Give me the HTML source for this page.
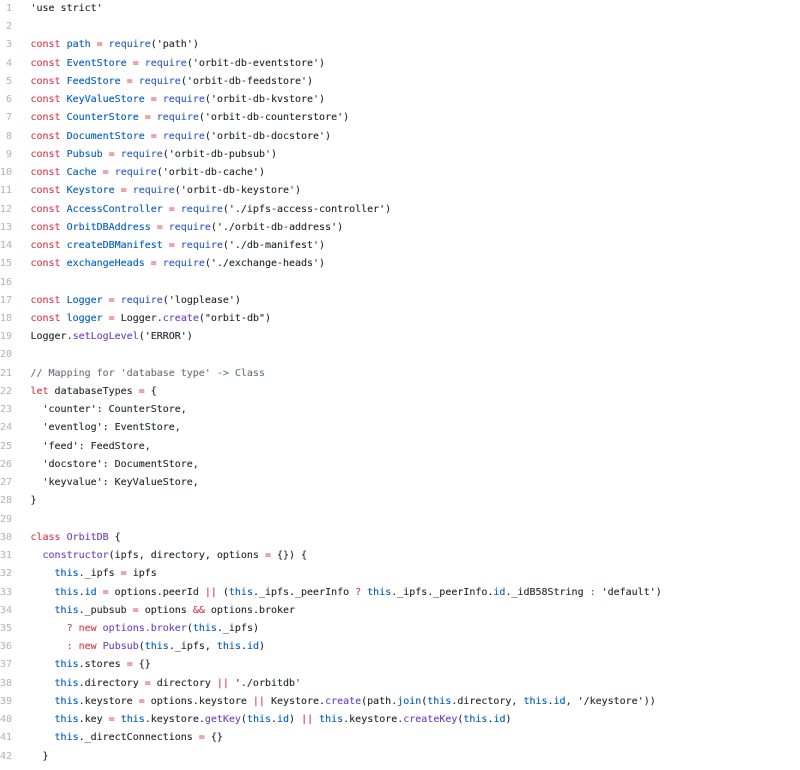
<!DOCTYPE html>
<html><head><meta charset="utf-8"><style>
html,body{margin:0;padding:0;background:#fff;width:800px;height:770px;overflow:hidden}
#w{position:absolute;left:0;top:0;width:800px;height:770px;font:10px/18.24px "DejaVu Sans Mono","Liberation Mono",monospace;color:#24292e;filter:blur(.25px);-webkit-text-stroke:.12px currentColor}
#n{position:absolute;left:0;top:0;width:12px;text-align:right;color:#b8b8b8;margin:0;font:inherit}
#c{position:absolute;left:30.5px;top:0;margin:0;font:inherit;white-space:pre;letter-spacing:-.01px}
i{font-style:normal}.k{color:#d73a49}.b{color:#005cc5}.r{color:#2f5cc5}.f{color:#6f42c1}.g{color:#6a737d}
</style></head><body><div id="w">
<pre id="n">1
2
3
4
5
6
7
8
9
10
11
12
13
14
15
16
17
18
19
20
21
22
23
24
25
26
27
28
29
30
31
32
33
34
35
36
37
38
39
40
41
42</pre>
<pre id="c">'use strict'

<i class="k">const</i> <i class="b">path</i> <i class="k">=</i> <i class="r">require</i>('path')
<i class="k">const</i> <i class="b">EventStore</i> <i class="k">=</i> <i class="r">require</i>('orbit-db-eventstore')
<i class="k">const</i> <i class="b">FeedStore</i> <i class="k">=</i> <i class="r">require</i>('orbit-db-feedstore')
<i class="k">const</i> <i class="b">KeyValueStore</i> <i class="k">=</i> <i class="r">require</i>('orbit-db-kvstore')
<i class="k">const</i> <i class="b">CounterStore</i> <i class="k">=</i> <i class="r">require</i>('orbit-db-counterstore')
<i class="k">const</i> <i class="b">DocumentStore</i> <i class="k">=</i> <i class="r">require</i>('orbit-db-docstore')
<i class="k">const</i> <i class="b">Pubsub</i> <i class="k">=</i> <i class="r">require</i>('orbit-db-pubsub')
<i class="k">const</i> <i class="b">Cache</i> <i class="k">=</i> <i class="r">require</i>('orbit-db-cache')
<i class="k">const</i> <i class="b">Keystore</i> <i class="k">=</i> <i class="r">require</i>('orbit-db-keystore')
<i class="k">const</i> <i class="b">AccessController</i> <i class="k">=</i> <i class="r">require</i>('./ipfs-access-controller')
<i class="k">const</i> <i class="b">OrbitDBAddress</i> <i class="k">=</i> <i class="r">require</i>('./orbit-db-address')
<i class="k">const</i> <i class="b">createDBManifest</i> <i class="k">=</i> <i class="r">require</i>('./db-manifest')
<i class="k">const</i> <i class="b">exchangeHeads</i> <i class="k">=</i> <i class="r">require</i>('./exchange-heads')

<i class="k">const</i> <i class="b">Logger</i> <i class="k">=</i> <i class="r">require</i>('logplease')
<i class="k">const</i> <i class="b">logger</i> <i class="k">=</i> Logger.<i class="f">create</i>("orbit-db")
Logger.<i class="f">setLogLevel</i>('ERROR')

<i class="g">// Mapping for 'database type' -&gt; Class</i>
<i class="k">let</i> databaseTypes <i class="k">=</i> {
  'counter': CounterStore,
  'eventlog': EventStore,
  'feed': FeedStore,
  'docstore': DocumentStore,
  'keyvalue': KeyValueStore,
}

<i class="k">class</i> <i class="f">OrbitDB</i> {
  <i class="f">constructor</i>(ipfs, directory, options <i class="k">=</i> {}) {
    <i class="b">this</i>._ipfs <i class="k">=</i> ipfs
    <i class="b">this</i>.<i class="b">id</i> <i class="k">=</i> options.peerId <i class="k">||</i> (<i class="b">this</i>._ipfs._peerInfo <i class="k">?</i> <i class="b">this</i>._ipfs._peerInfo.<i class="b">id</i>._idB58String <i class="k">:</i> 'default')
    <i class="b">this</i>._pubsub <i class="k">=</i> options <i class="k">&amp;&amp;</i> options.broker
      <i class="k">?</i> <i class="k">new</i> <i class="f">options.broker</i>(<i class="b">this</i>._ipfs)
      <i class="k">:</i> <i class="k">new</i> <i class="f">Pubsub</i>(<i class="b">this</i>._ipfs, <i class="b">this</i>.<i class="b">id</i>)
    <i class="b">this</i>.stores <i class="k">=</i> {}
    <i class="b">this</i>.directory <i class="k">=</i> directory <i class="k">||</i> './orbitdb'
    <i class="b">this</i>.keystore <i class="k">=</i> options.keystore <i class="k">||</i> Keystore.<i class="f">create</i>(path.<i class="b">join</i>(<i class="b">this</i>.directory, <i class="b">this</i>.<i class="b">id</i>, '/keystore'))
    <i class="b">this</i>.key <i class="k">=</i> <i class="b">this</i>.keystore.<i class="f">getKey</i>(<i class="b">this</i>.<i class="b">id</i>) <i class="k">||</i> <i class="b">this</i>.keystore.<i class="f">createKey</i>(<i class="b">this</i>.<i class="b">id</i>)
    <i class="b">this</i>._directConnections <i class="k">=</i> {}
  }</pre>
</div></body></html>
